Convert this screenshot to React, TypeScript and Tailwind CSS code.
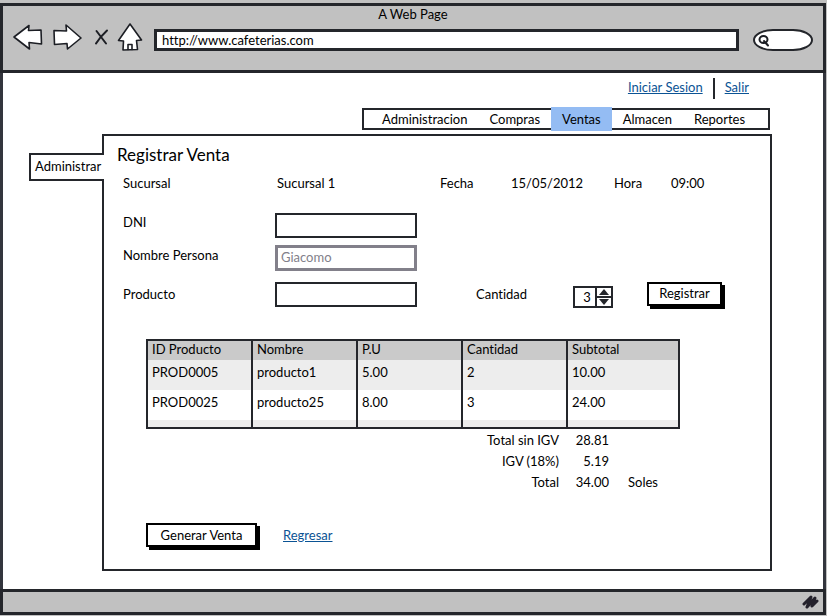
import { useState } from 'react';

const navItems = ['Administracion', 'Compras', 'Ventas', 'Almacen', 'Reportes'];

const columns = ['ID Producto', 'Nombre', 'P.U', 'Cantidad', 'Subtotal'];

const products = [
  ['PROD0005', 'producto1', '5.00', '2', '10.00'],
  ['PROD0025', 'producto25', '8.00', '3', '24.00'],
];

const iconProps = {
  fill: 'white',
  stroke: '#1c1e24',
  strokeWidth: 1.6,
  strokeLinejoin: 'round' as const,
  strokeLinecap: 'round' as const,
};

function BrowserBar() {
  const [url, setUrl] = useState('http://www.cafeterias.com');
  return (
    <header className="mr-px h-[70px] border-[3px] border-[#24262b] bg-[#c1c1c1]">
      <h1 className="text-center leading-4">A Web Page</h1>
      <div className="flex h-8 items-center pr-2.5 pl-2">
        <button type="button" aria-label="Atras" className="mr-2 shrink-0">
          <svg width="32" height="28" viewBox="0 0 32 28" {...iconProps}>
            <path d="M3 13 18 1.500 17.500 6.500 30 6 30.500 20 18 18.500 18.500 25Z" />
          </svg>
        </button>
        <button type="button" aria-label="Adelante" className="mr-3 shrink-0">
          <svg width="31" height="28" viewBox="0 0 31 28" {...iconProps}>
            <path d="M3 6.500 15.500 7 15 1 30 14 16.500 25 16 19.500 3.500 20.500Z" />
          </svg>
        </button>
        <button type="button" aria-label="Detener" className="mr-2 shrink-0">
          <svg width="15" height="18" viewBox="0 0 15 18" {...iconProps} fill="none" strokeWidth="2">
            <path d="M2.500 2 12 14.500M13 1.500Q6 8 2 14.500" />
          </svg>
        </button>
        <button type="button" aria-label="Inicio" className="mr-[11px] shrink-0">
          <svg width="26" height="30" viewBox="0 0 26 30" {...iconProps}>
            <path d="M13 1 24.500 17 19.500 17.500 20.500 26.500 6 27 6.500 18 1.500 17.500Z" />
            <path d="M11 26.500V21.500H15V26.500" fill="none" />
          </svg>
        </button>
        <input
          aria-label="Direccion"
          value={url}
          onChange={(e) => setUrl(e.target.value)}
          className="mt-1 h-[22px] min-w-0 flex-1 border-[3px] border-[#24262b] bg-white px-[5px] outline-none"
        />
        <label className="mt-1 ml-3.5 flex h-[22px] w-[60px] items-center rounded-[20px/11px] border-2 border-[#24262b] bg-white pl-px">
          <svg width="14" height="14" viewBox="0 0 14 14" {...iconProps} fill="none" strokeWidth="2" className="shrink-0">
            <ellipse cx="7.500" cy="6.500" rx="4" ry="3.500" />
            <path d="M8 8 12 12.500" />
          </svg>
          <input aria-label="Buscar" className="w-0 flex-1 bg-transparent outline-none" />
        </label>
      </div>
    </header>
  );
}

function QuantityStepper() {
  const [quantity, setQuantity] = useState(3);
  return (
    <div className="flex h-[22px] w-10 border-2 border-[#24262b]">
      <input
        id="cantidad"
        inputMode="numeric"
        value={quantity}
        onChange={(e) => setQuantity(Number(e.target.value) || 0)}
        className="w-0 flex-1 pl-1 text-center outline-none"
      />
      <div className="flex w-4 flex-col divide-y-2 divide-[#24262b] border-l-2 border-[#24262b]">
        <button type="button" aria-label="Aumentar" onClick={() => setQuantity(quantity + 1)} className="flex flex-1 items-center justify-center">
          <svg width="10" height="6" viewBox="0 0 10 6" fill="#24262b">
            <path d="M5 0 10 6H0Z" />
          </svg>
        </button>
        <button type="button" aria-label="Disminuir" onClick={() => setQuantity(quantity - 1)} className="flex flex-1 items-center justify-center">
          <svg width="10" height="6" viewBox="0 0 10 6" fill="#24262b">
            <path d="M0 0H10L5 6Z" />
          </svg>
        </button>
      </div>
    </div>
  );
}

export default function App() {
  const [dni, setDni] = useState('');
  const [product, setProduct] = useState('');

  return (
    <div className="flex min-h-screen flex-col bg-[#c1c1c1] pt-[3px] font-[Lato,sans-serif] text-[13px] leading-4 text-black [font-variant-ligatures:none]">
      <BrowserBar />

      <main className="mr-px flex-1 border-x-[3px] border-[#33353d] bg-white pb-[18px]">
        <div className="flex h-[35px] items-center justify-end pr-[74px] pb-1">
          <a href="#sesion" className="pb-1 text-[#0b5394] underline">Iniciar Sesion</a>
          <span className="mr-2.5 ml-2.5 h-[21px] w-0.5 bg-[#24262b]" />
          <a href="#salir" className="pb-1 text-[#0b5394] underline">Salir</a>
        </div>

        <nav className="mr-[53px] ml-auto flex h-[22px] w-[408px] items-center border-2 border-[#24262b] pl-[7px]">
          {navItems.map((item) => (
            <a
              key={item}
              href={`#${item.toLowerCase()}`}
              aria-current={item === 'Ventas' ? 'page' : undefined}
              className="flex h-6 items-center px-[11px] aria-[current=page]:bg-[#94bcf3]"
            >
              {item}
            </a>
          ))}
        </nav>

        <div className="mt-1 mr-[51px] ml-[26px] flex items-start">
          <aside className="relative z-10 mt-[19px] -mr-0.5 flex h-7 w-[75px] shrink-0 items-center border-2 border-r-0 border-[#24262b] bg-white pb-0.5 pl-1">
            <a href="#administrar">Administrar</a>
          </aside>

          <section className="min-h-[437px] min-w-0 flex-1 border-2 border-[#24262b]">
            <h2 className="mt-[9px] ml-[13px] text-[17px] leading-5">Registrar Venta</h2>

            <div className="mt-2 ml-[19px] flex h-5 items-center">
              <span className="w-[154px]">Sucursal</span>
              <span className="w-[163px]">Sucursal 1</span>
              <span className="w-[71px]">Fecha</span>
              <span className="w-[103px]">15/05/2012</span>
              <span className="w-[57px]">Hora</span>
              <span>09:00</span>
            </div>

            <form className="mt-5 ml-[19px]" onSubmit={(e) => e.preventDefault()}>
              <div className="flex">
                <label htmlFor="dni" className="w-[152px] pt-px">DNI</label>
                <input id="dni" value={dni} onChange={(e) => setDni(e.target.value)} className="h-[25px] w-[142px] border-2 border-[#24262b] px-1 outline-none" />
              </div>
              <div className="mt-[7px] flex">
                <label htmlFor="nombre" className="w-[152px] pt-0.5">Nombre Persona</label>
                <input id="nombre" defaultValue="Giacomo" disabled className="h-[26px] w-[142px] border-[3px] border-[#82808a] px-[3px] pb-0.5 text-[#82808a]" />
              </div>
              <div className="mt-[11px] flex">
                <label htmlFor="producto" className="w-[152px] pt-1">Producto</label>
                <input id="producto" value={product} onChange={(e) => setProduct(e.target.value)} className="h-[25px] w-[142px] border-2 border-[#24262b] px-1 outline-none" />
                <label htmlFor="cantidad" className="ml-[59px] w-[97px] pt-1">Cantidad</label>
                <div className="pt-1">
                  <QuantityStepper />
                </div>
                <button type="submit" className="ml-[34px] h-6 w-[75px] border-2 border-black bg-white pb-0.5 shadow-[3px_3px_0_black]">Registrar</button>
              </div>
            </form>

            <div className="mt-[31px] mr-[90px] ml-[42px]">
              <table className="w-full table-fixed border-collapse border-2 border-[#24262b] text-left">
                <thead>
                  <tr className="h-5 bg-[#cacaca]">
                    {columns.map((column) => (
                      <th key={column} className="w-[105px] border-l-2 border-[#24262b] pb-[3px] pl-1 leading-4 font-normal last:w-auto">{column}</th>
                    ))}
                  </tr>
                </thead>
                <tbody>
                  {products.map((product) => (
                    <tr key={product[0]} className="h-[30px] odd:bg-[#ededed]">
                      {product.map((value, i) => (
                        <td key={columns[i]} className="border-l-2 border-[#24262b] pb-1.5 pl-1">{value}</td>
                      ))}
                    </tr>
                  ))}
                  <tr className="h-2 bg-[#ededed]">
                    {columns.map((column) => (
                      <td key={column} className="border-l-2 border-[#24262b]" />
                    ))}
                  </tr>
                </tbody>
              </table>

              <dl className="mt-px grid grid-cols-[1fr_50px_71px] leading-[21px]">
                <dt className="text-right">Total sin IGV</dt>
                <dd className="text-right">28.81</dd>
                <dd />
                <dt className="text-right">IGV (18%)</dt>
                <dd className="text-right">5.19</dd>
                <dd />
                <dt className="text-right">Total</dt>
                <dd className="text-right">34.00</dd>
                <dd className="pl-[19px]">Soles</dd>
              </dl>

              <div className="mt-[30px] flex items-center">
                <button type="button" className="h-6 w-[111px] border-2 border-black bg-white shadow-[3px_3px_0_black]">Generar Venta</button>
                <a href="#regresar" className="ml-[26px] text-[#0b5394] underline">Regresar</a>
              </div>
            </div>
          </section>
        </div>
      </main>

      <footer className="mr-px mb-px flex h-[26px] items-center justify-end border-[3px] border-[#24262b] bg-[#c1c1c1] pr-1">
        <svg width="17" height="14" viewBox="0 0 17 14" fill="none" stroke="#24222c" strokeWidth="3" strokeLinecap="round" strokeLinejoin="round">
          <path d="M2 9 9 2 5 12 13 3 10 11 15 6" />
        </svg>
      </footer>
    </div>
  );
}
